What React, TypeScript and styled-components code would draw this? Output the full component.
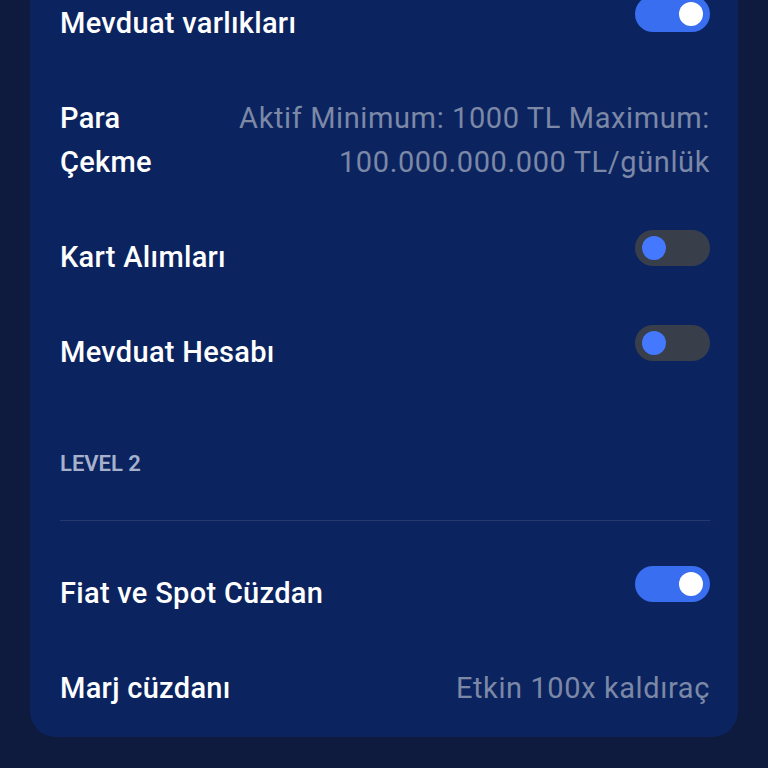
import React from 'react'
import styled, { createGlobalStyle } from 'styled-components'

const GlobalStyle = createGlobalStyle`
    html, body {
        margin: 0;
        padding: 0;
        background: #0f1b3e;
        font-family: Roboto, 'Noto Sans', sans-serif;
    }
`

type Item =
    | { kind: 'toggle'; label: string; on: boolean }
    | { kind: 'text'; label: string; value: React.ReactNode }

const LEVEL_1: Item[] = [
    { kind: 'toggle', label: 'Mevduat varlıkları', on: true },
    {
        kind: 'text',
        label: 'Para Çekme',
        value: 'Aktif Minimum: 1000 TL Maximum: 100.000.000.000 TL/günlük',
    },
    { kind: 'toggle', label: 'Kart Alımları', on: false },
    { kind: 'toggle', label: 'Mevduat Hesabı', on: false },
]

const LEVEL_2: Item[] = [
    { kind: 'toggle', label: 'Fiat ve Spot Cüzdan', on: true },
    { kind: 'text', label: 'Marj cüzdanı', value: 'Etkin 100x kaldıraç' },
]

function Toggle({ on }: { on: boolean }): JSX.Element {
    return (
        <Track $on={on} role="switch" aria-checked={on}>
            <Knob $on={on} />
        </Track>
    )
}

function Row({ item }: { item: Item }): JSX.Element {
    return (
        <RowStyles>
            <Label $narrow={item.kind === 'text' && item.label === 'Para Çekme'}>{item.label}</Label>
            {item.kind === 'toggle' ? <Toggle on={item.on} /> : <Value>{item.value}</Value>}
        </RowStyles>
    )
}

export default function App(): JSX.Element {
    return (
        <>
            <GlobalStyle />
            <Page>
                <Card>
                    {LEVEL_1.map((item) => (
                        <Row key={item.label} item={item} />
                    ))}
                    <SectionTitle>LEVEL 2</SectionTitle>
                    <Divider />
                    {LEVEL_2.map((item) => (
                        <Row key={item.label} item={item} />
                    ))}
                </Card>
            </Page>
        </>
    )
}

const Page = styled.div`
    width: 768px;
    min-height: 768px;
    box-sizing: border-box;
    padding: 0 30px 31px;
    overflow: hidden;
`

const Card = styled.section`
    margin-top: -25px;
    background: #0b2460;
    border-radius: 0 0 26px 26px;
    padding: 0 28px 2px 30px;
    display: flex;
    flex-direction: column;
`

const RowStyles = styled.div`
    display: flex;
    justify-content: space-between;
    align-items: flex-start;
    gap: 24px;
    padding: 26px 0 25px;
`

const Label = styled.div<{ $narrow: boolean }>`
    color: #ffffff;
    font-size: 29px;
    font-weight: 500;
    letter-spacing: 0.3px;
    line-height: 44px;
    white-space: ${(p) => (p.$narrow ? 'normal' : 'nowrap')};
    max-width: ${(p) => (p.$narrow ? '110px' : 'none')};
`

const Value = styled.div`
    color: #7c88a6;
    font-size: 29px;
    font-weight: 400;
    letter-spacing: 0.6px;
    line-height: 44px;
    text-align: right;
    max-width: 490px;
`

const Track = styled.div<{ $on: boolean }>`
    flex: none;
    width: 75px;
    height: 36px;
    border-radius: 18px;
    background: ${(p) => (p.$on ? '#3a6ef0' : '#393e4b')};
    display: flex;
    align-items: center;
    justify-content: ${(p) => (p.$on ? 'flex-end' : 'flex-start')};
    padding: 0 7px;
    box-sizing: border-box;
    margin-top: -5px;
`

const Knob = styled.div<{ $on: boolean }>`
    width: 24px;
    height: 24px;
    border-radius: 50%;
    background: ${(p) => (p.$on ? '#ffffff' : '#4479ff')};
`

const SectionTitle = styled.div`
    margin-top: 51px;
    color: #a7b1cc;
    font-size: 22px;
    font-weight: 600;
    line-height: 28px;
`

const Divider = styled.hr`
    border: none;
    height: 1px;
    background: #26396d;
    margin: 42px 0 24px;
`
